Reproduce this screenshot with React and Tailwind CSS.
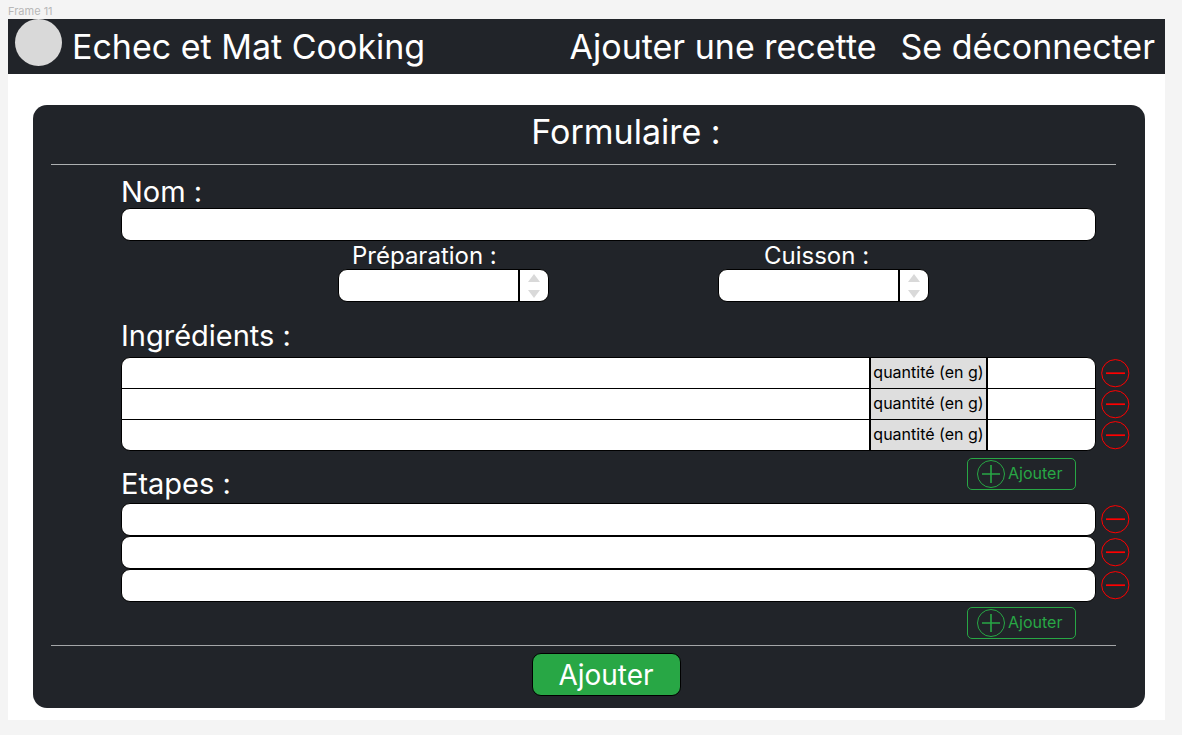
import { useState } from "react";

const fieldBox = "border border-black bg-white px-2 text-base text-black outline-none";

function MinusButton({ label, onClick }) {
  return (
    <button type="button" aria-label={label} onClick={onClick} className="size-[29px] shrink-0">
      <svg viewBox="0 0 29 29" className="size-full" fill="none" stroke="#ff0000">
        <circle cx="14.3" cy="14.2" r="13.6" strokeWidth="1" />
        <path d="M5 14.2H24" strokeWidth="1.7" />
      </svg>
    </button>
  );
}

function AddButton({ onClick }) {
  return (
    <button
      type="button"
      onClick={onClick}
      className="mr-[54px] flex h-8 w-[109px] items-center gap-[3px] rounded-[5px] border border-[#28a745] pl-[9px] text-base text-[#28a745]"
    >
      <svg viewBox="0 0 28 28" className="size-7 shrink-0" fill="none" stroke="#28a745">
        <circle cx="14" cy="14" r="13.5" strokeWidth="1" />
        <path d="M5 14H23M14 5V23" strokeWidth="1.6" />
      </svg>
      <span className="pb-[2px] leading-6">Ajouter</span>
    </button>
  );
}

function DurationField({ id, label, labelClass }) {
  const [value, setValue] = useState("");
  const step = (delta) => setValue((v) => String(Math.max(0, Number(v) + delta)));
  return (
    <div className="flex w-[211px] flex-col">
      <label htmlFor={id} className={`pt-[2px] text-2xl leading-[26px] whitespace-nowrap ${labelClass}`}>
        {label}
      </label>
      <div className="flex h-[33px] overflow-hidden rounded-[9px] border border-black bg-white">
        <input
          id={id}
          type="number"
          value={value}
          onChange={(e) => setValue(e.target.value)}
          className="min-w-0 flex-1 appearance-none border-r-2 border-black px-2 text-base text-black outline-none [-moz-appearance:textfield] [&::-webkit-inner-spin-button]:appearance-none"
        />
        <div className="flex w-7 flex-col items-center justify-center gap-2">
          <button type="button" aria-label={`Augmenter ${label}`} onClick={() => step(1)}>
            <svg viewBox="0 0 12 8" className="block h-2 w-3" fill="#d9d9d9">
              <path d="M6 0L12 8H0Z" />
            </svg>
          </button>
          <button type="button" aria-label={`Diminuer ${label}`} onClick={() => step(-1)}>
            <svg viewBox="0 0 12 8" className="block h-2 w-3" fill="#d9d9d9">
              <path d="M6 8L0 0H12Z" />
            </svg>
          </button>
        </div>
      </div>
    </div>
  );
}

export default function App() {
  const [ingredients, setIngredients] = useState([1, 2, 3]);
  const [steps, setSteps] = useState([1, 2, 3]);
  const add = (list) => [...list, Math.max(0, ...list) + 1];

  return (
    <div className="min-h-screen bg-[#f4f4f4] pr-[17px] pb-[15px] pl-2 font-['Inter',sans-serif] text-white">
      <p className="pt-1 text-[11px] leading-[15px] text-[#b8b8b8]">Frame 11</p>
      <div className="bg-white pb-3">
        <header className="flex h-[55px] justify-between bg-[#212429] pr-[10px] pl-[7px] text-[34px] leading-[55px]">
          <a href="#accueil" className="flex gap-[10px] whitespace-nowrap">
            <span className="size-[47px] rounded-full bg-[#d9d9d9]" />
            Echec et Mat Cooking
          </a>
          <nav className="flex gap-6 whitespace-nowrap">
            <a href="#ajouter">Ajouter une recette</a>
            <a href="#deconnexion">Se déconnecter</a>
          </nav>
        </header>

        <form
          onSubmit={(e) => e.preventDefault()}
          className="mt-[31px] mr-5 ml-[25px] rounded-[14px] bg-[#212429] pb-3"
        >
          <h1 className="pb-[5px] pl-[74px] text-center text-[34px] leading-[54px]">Formulaire :</h1>
          <hr className="mr-[29px] ml-[18px] border-[#adb0b1]" />

          <div className="pt-[11px] pr-[15px] pl-[88px]">
            <div className="mr-[34px] flex flex-col">
              <label htmlFor="nom" className="text-[29px] leading-8">
                Nom :
              </label>
              <input id="nom" type="text" className={`h-[33px] rounded-[9px] ${fieldBox}`} />
            </div>

            <div className="mr-[34px] flex justify-center gap-[169px] pl-[50px]">
              <DurationField id="preparation" label="Préparation :" labelClass="pl-[14px]" />
              <DurationField id="cuisson" label="Cuisson :" labelClass="pl-[46px]" />
            </div>

            <h2 className="mt-[18px] mb-[5px] text-[29px] leading-8">Ingrédients :</h2>
            <div className="pb-px">
              {ingredients.map((id) => (
                <div key={id} className="group -mb-px flex items-center gap-[5px]">
                  <div className="flex h-8 flex-1 overflow-hidden border border-black bg-white group-first:rounded-t-[9px] group-last:rounded-b-[9px]">
                    <input
                      type="text"
                      aria-label={`Ingrédient ${id}`}
                      className="min-w-0 flex-1 px-2 text-base text-black outline-none"
                    />
                    <label
                      htmlFor={`quantite-${id}`}
                      className="w-[119px] border-x-2 border-black bg-[#dedede] text-center text-base leading-7 whitespace-nowrap text-black"
                    >
                      quantité (en g)
                    </label>
                    <input
                      id={`quantite-${id}`}
                      type="text"
                      inputMode="numeric"
                      className="w-[107px] px-2 text-base text-black outline-none"
                    />
                  </div>
                  <MinusButton
                    label={`Supprimer l'ingrédient ${id}`}
                    onClick={() => setIngredients(ingredients.filter((i) => i !== id))}
                  />
                </div>
              ))}
            </div>

            <div className="mb-[3px] flex items-start justify-between pt-[7px]">
              <h2 className="pt-[10px] text-[29px] leading-8">Etapes :</h2>
              <AddButton onClick={() => setIngredients(add(ingredients))} />
            </div>
            {steps.map((id) => (
              <div key={id} className="flex items-center gap-[5px]">
                <input
                  type="text"
                  aria-label={`Etape ${id}`}
                  className={`h-[33px] min-w-0 flex-1 rounded-[9px] ${fieldBox}`}
                />
                <MinusButton
                  label={`Supprimer l'étape ${id}`}
                  onClick={() => setSteps(steps.filter((i) => i !== id))}
                />
              </div>
            ))}
            <div className="flex justify-end pt-[5px]">
              <AddButton onClick={() => setSteps(add(steps))} />
            </div>
          </div>

          <hr className="mt-[6px] mr-[29px] ml-[18px] border-[#a4a6a8]" />
          <div className="flex justify-center pt-[7px] pl-[34px]">
            <button
              type="submit"
              className="h-[43px] w-[149px] rounded-[9px] border border-black bg-[#28a745] text-[28px] leading-10"
            >
              Ajouter
            </button>
          </div>
        </form>
      </div>
    </div>
  );
}
